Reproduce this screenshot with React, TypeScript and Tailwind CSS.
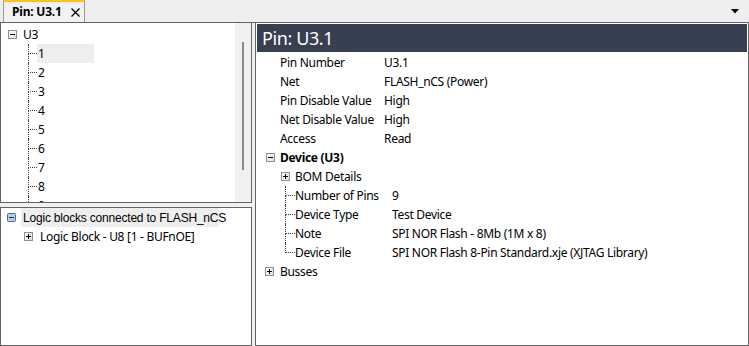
import { type ReactNode } from "react";

const Expander = ({ open }: { open: boolean }) => (
  <svg width="9" height="9" viewBox="0 0 9 9" className="shrink-0">
    <defs>
      <linearGradient id="exp" x1="0" y1="0" x2="1" y2="1">
        <stop offset="0" stopColor="#ffffff" />
        <stop offset="1" stopColor="#dcdcdc" />
      </linearGradient>
    </defs>
    <rect x="0.5" y="0.5" width="8" height="8" fill="url(#exp)" stroke="#8f8f8f" />
    <path d="M2 4.5h5" stroke="#000" />
    {!open && <path d="M4.5 2v5" stroke="#000" />}
  </svg>
);

const BlueExpander = () => (
  <svg width="9" height="9" viewBox="0 0 9 9" className="shrink-0">
    <rect x="0.5" y="0.5" width="8" height="8" rx="1" fill="#b9cde6" stroke="#4f6b91" />
    <path d="M2 4.5h5" stroke="#1d2f4a" />
  </svg>
);

const TreeLine = ({ last = false, w = "w-[9px]" }: { last?: boolean; w?: string }) => (
  <div className={`flex ${w} shrink-0 flex-col self-stretch`}>
    <div className="h-[10px] border-l border-b border-dotted border-[#3a3a3a]" />
    {!last && <div className="flex-1 border-l border-dotted border-[#3a3a3a]" />}
  </div>
);

const Row = ({ children, className = "" }: { children: ReactNode; className?: string }) => (
  <div className={`flex h-[19px] items-center whitespace-nowrap ${className}`}>{children}</div>
);

const pinRows = [
  ["Pin Number", "U3.1"],
  ["Net", "FLASH_nCS (Power)"],
  ["Pin Disable Value", "High"],
  ["Net Disable Value", "High"],
  ["Access", "Read"],
];

const deviceRows = [
  ["Number of Pins", "9"],
  ["Device Type", "Test Device"],
  ["Note", "SPI NOR Flash - 8Mb (1M x 8)"],
  ["Device File", "SPI NOR Flash 8-Pin Standard.xje (XJTAG Library)"],
];

export default function App() {
  return (
    <div className="flex h-[346px] w-[749px] flex-col overflow-hidden bg-[#f0f0f0] font-['Noto_Sans',sans-serif] text-[12px] tracking-[-0.3px] text-black">
      {/* tab strip */}
      <div className="flex h-[23px] shrink-0 items-stretch justify-between border-b border-[#646464] bg-[#eeeeee]">
        <div className="ml-[3px] flex w-[82px] items-center border-x border-t-2 border-[#9a9a9a] border-t-[#ffc20e] bg-[#f2f2f2] pl-[8px]">
          <span className="font-bold leading-none tracking-[-0.2px]">Pin: U3.1</span>
          <svg width="9" height="9" viewBox="0 0 9 9" className="ml-[9px] mt-[1px]">
            <path d="M0.5 0.5l8 8M8.5 0.5l-8 8" stroke="#000" strokeWidth="1.3" />
          </svg>
        </div>
        <div className="flex items-center pr-[10px]">
          <svg width="8" height="5" viewBox="0 0 8 5">
            <path d="M0 0h8L4 4.5z" fill="#000" />
          </svg>
        </div>
      </div>

      <div className="flex flex-1 gap-[3px]">
        {/* left column */}
        <div className="flex w-[252px] shrink-0 flex-col gap-[4px]">
          <div className="flex h-[180px] border-x border-b border-[#646464] bg-white">
            <div className="flex-1 overflow-hidden pt-[2px]">
              <Row className="pl-[7px]">
                <Expander open />
                <span className="ml-[6px]">U3</span>
              </Row>
              {["1", "2", "3", "4", "5", "6", "7", "8", "9"].map((n, i) => (
                <Row key={n} className="pl-[27px]">
                  <TreeLine />
                  <span className={`flex h-full items-center pl-[1px] ${i === 0 ? "w-[57px] bg-[#eeeeee]" : ""}`}>{n}</span>
                </Row>
              ))}
            </div>
            <div className="flex w-[16px] shrink-0 justify-center bg-[#f0f0f0] pt-[19px]">
              <div className="h-[128px] w-[2px] bg-[#8a8a8a]" />
            </div>
          </div>

          <div className="flex-1 border border-[#646464] bg-white">
            <Row className="pl-[6px]">
              <BlueExpander />
              <span className="ml-[5px] flex h-full w-[198px] items-center bg-[#eeeeee] pl-[2px] font-['Liberation_Sans',sans-serif] tracking-[-0.2px]">
                Logic blocks connected to FLASH_nCS
              </span>
            </Row>
            <Row className="pl-[23px]">
              <Expander open={false} />
              <span className="ml-[7px]">Logic Block - U8 [1 - BUFnOE]</span>
            </Row>
          </div>
        </div>

        {/* right panel */}
        <div className="flex-1 border-x border-b border-[#646464] bg-white pl-[1px] pr-[1px] pt-[1px]">
          <div className="flex h-[28px] items-center bg-[#383f51] pl-[5px] text-[18px] leading-none tracking-[-0.4px] text-white">
            Pin: U3.1
          </div>
          <div className="pt-[1px]">
            {pinRows.map(([k, v]) => (
              <Row key={k} className="pl-[23px]">
                <span className="w-[104px] shrink-0">{k}</span>
                <span>{v}</span>
              </Row>
            ))}
            <Row className="pl-[9px]">
              <Expander open />
              <span className="ml-[5px] font-bold">Device (U3)</span>
            </Row>
            <Row className="pl-[24px]">
              <Expander open={false} />
              <span className="ml-[5px]">BOM Details</span>
            </Row>
            {deviceRows.map(([k, v], i) => (
              <Row key={k} className="pl-[28px]">
                <TreeLine w="w-[10px]" last={i === deviceRows.length - 1} />
                <span className="w-[97px] shrink-0">{k}</span>
                <span>{v}</span>
              </Row>
            ))}
            <Row className="pl-[8px]">
              <Expander open={false} />
              <span className="ml-[6px]">Busses</span>
            </Row>
          </div>
        </div>
      </div>
    </div>
  );
}
